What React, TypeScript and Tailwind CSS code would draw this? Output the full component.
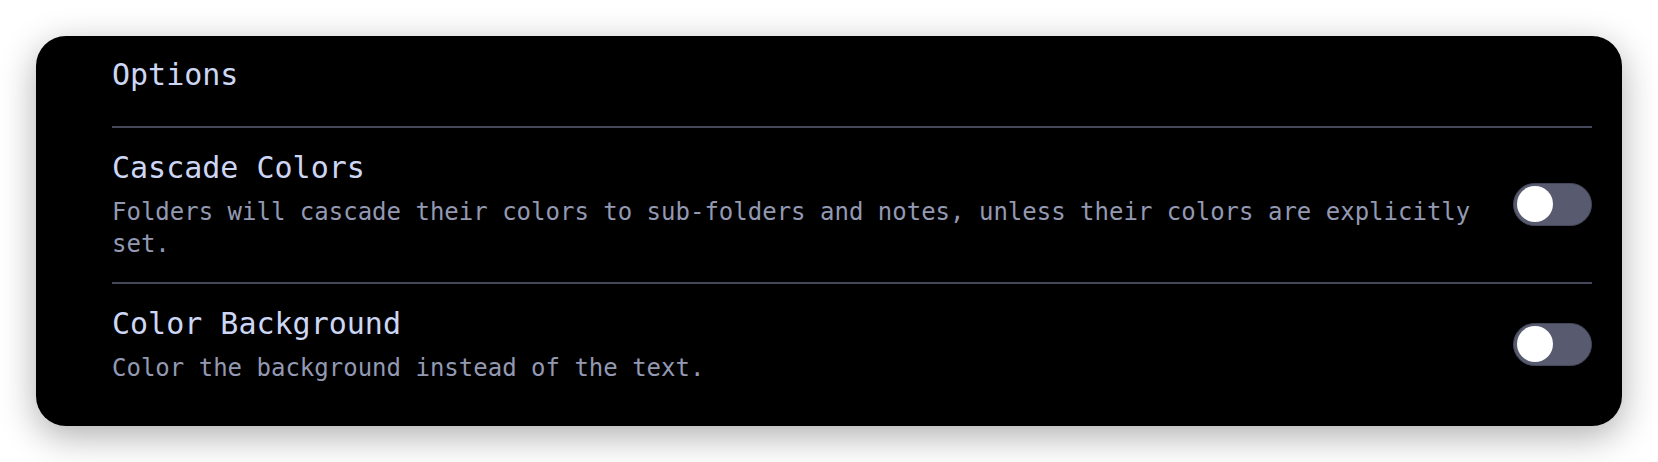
import { useState } from "react";

const mono = { fontFamily: '"DejaVu Sans Mono", "Liberation Mono", monospace' };

export default function App() {
  const [cascade, setCascade] = useState(false);
  const [background, setBackground] = useState(false);

  return (
    <div className="w-[1658px] h-[462px] bg-white pt-[36px] px-[36px]" style={mono}>
      <div className="h-[390px] rounded-[30px] bg-black pl-[76px] pr-[30px] shadow-[0_10px_36px_rgba(0,0,0,0.32)]">
        <div className="pt-[21px] pb-[33px]">
          <h2 className="text-[30px] leading-[36px] text-[#cdd6f4]">Options</h2>
        </div>
        <div className="h-[2px] bg-[#45475a]" />
        <SettingRow
          title="Cascade Colors"
          description="Folders will cascade their colors to sub-folders and notes, unless their colors are explicitly set."
          checked={cascade}
          onChange={setCascade}
        />
        <div className="h-[2px] bg-[#45475a]" />
        <SettingRow
          title="Color Background"
          description="Color the background instead of the text."
          checked={background}
          onChange={setBackground}
        />
      </div>
    </div>
  );
}

function SettingRow({
  title,
  description,
  checked,
  onChange,
}: {
  title: string;
  description: string;
  checked: boolean;
  onChange: (v: boolean) => void;
}) {
  return (
    <div className="flex items-center gap-8 py-[22px]">
      <div className="flex-1 min-w-0">
        <div className="text-[30px] leading-[36px] text-[#cdd6f4]">{title}</div>
        <p className="mt-[10px] text-[24px] leading-[32px] text-[#9399b2]">{description}</p>
      </div>
      <Toggle checked={checked} onChange={onChange} />
    </div>
  );
}

function Toggle({ checked, onChange }: { checked: boolean; onChange: (v: boolean) => void }) {
  return (
    <button
      type="button"
      role="switch"
      aria-checked={checked}
      onClick={() => onChange(!checked)}
      className={`shrink-0 -mt-[2px] flex items-center w-[79px] h-[43px] rounded-full border border-[#45475a] px-[2.5px] ${
        checked ? "bg-[#89b4fa] justify-end" : "bg-[#585b70] justify-start"
      }`}
    >
      <span className="block w-[36px] h-[36px] rounded-full bg-white" />
    </button>
  );
}
